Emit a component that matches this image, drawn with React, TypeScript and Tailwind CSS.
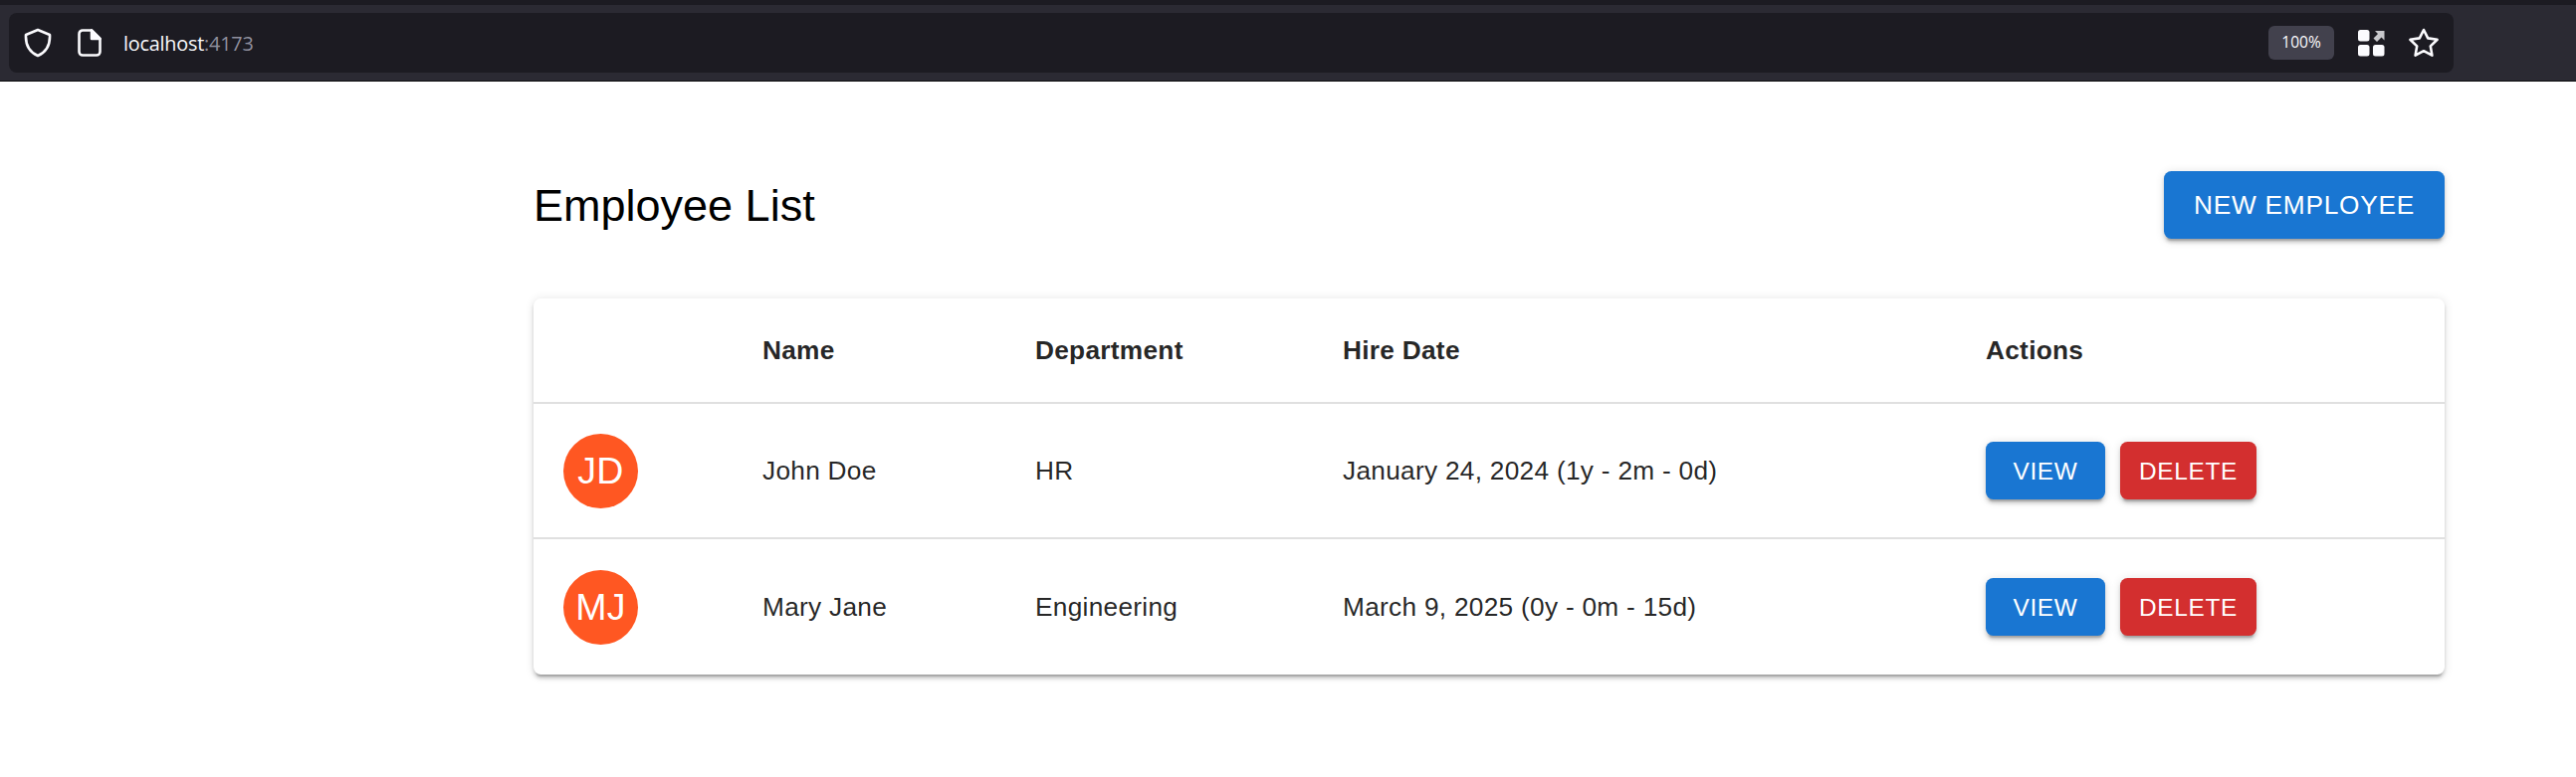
const cardShadow = "shadow-[0_5.6px_1.9px_-3.75px_rgba(0,0,0,0.2),0_3.75px_3.75px_0_rgba(0,0,0,0.14),0_1.9px_9.4px_0_rgba(0,0,0,0.12)]";

function ActionButton({ label, color }: { label: string; color: "blue" | "red" }) {
  return (
    <button
      className={
        "h-[58px] pt-[1px] rounded-[7.5px] text-white text-[24.4px] leading-[42px] tracking-[0.7px] shadow-[0_5.6px_1.9px_-3.75px_rgba(0,0,0,0.2),0_3.75px_3.75px_0_rgba(0,0,0,0.14),0_1.9px_9.4px_0_rgba(0,0,0,0.12)] " +
        (color === "blue" ? "bg-[#1976d2] w-[120px]" : "bg-[#d32f2f] w-[137px]")
      }
    >
      {label}
    </button>
  );
}

function Row({ initials, name, dept, date, last }: { initials: string; name: string; dept: string; date: string; last?: boolean }) {
  const cell = "px-[30px] align-middle " + (last ? "" : "border-b-2 border-[#e0e0e0]");
  const text = "pt-[2px]";
  return (
    <tr className={last ? "h-[137px]" : "h-[136px]"}>
      <td className={cell}>
        <div className="w-[75px] h-[75px] rounded-full bg-[#ff5722] text-white flex items-center justify-center pt-[1px] text-[37.5px]">
          {initials}
        </div>
      </td>
      <td className={cell}><div className={text}>{name}</div></td>
      <td className={cell}><div className={text}>{dept}</div></td>
      <td className={cell}><div className={text}>{date}</div></td>
      <td className={cell}>
        <div className="flex gap-[15px]">
          <ActionButton label="VIEW" color="blue" />
          <ActionButton label="DELETE" color="red" />
        </div>
      </td>
    </tr>
  );
}

function BrowserBar() {
  return (
    <div className="h-[82px] bg-[#2b2a33] border-t-[5px] border-t-[#1c1b22] border-b border-b-[#0c0c0d] pt-[8px] pl-[9px] pr-[123px]">
      <div className="h-[60px] rounded-[8px] bg-[#1c1b22] flex items-center pl-[15px] pr-[14px] text-white font-['Open_Sans',sans-serif]">
        <svg width="28" height="30" viewBox="0 0 28 30" fill="none" stroke="#fbfbfe" strokeWidth="2.6" strokeLinejoin="round" className="shrink-0">
          <path d="M14 2 L26 7 C26.5 17 23 24 14 28 C5 24 1.500 17 2 7 Z" />
        </svg>
        <svg width="24" height="28" viewBox="0 0 24 28" fill="none" stroke="#fbfbfe" strokeWidth="2.6" strokeLinejoin="round" className="shrink-0 ml-[26px]">
          <path d="M5 1.500 H14 L22.500 10 V23 A3.500 3.500 0 0 1 19 26.500 H5 A3.500 3.500 0 0 1 1.500 23 V5 A3.500 3.500 0 0 1 5 1.500 Z" />
          <path d="M14 1.500 V10 H22.500 Z" fill="#fbfbfe" />
        </svg>
        <div className="ml-[22px] pt-[2px] text-[19.8px] tracking-[-0.2px] text-[#fbfbfe]">
          localhost<span className="text-[#8f8f9d]">:4173</span>
        </div>
        <div className="ml-auto mr-[-2px] h-[34px] w-[66px] rounded-[6px] bg-[#42414d] flex items-center justify-center text-[15.500px] text-[#fbfbfe]">
          100%
        </div>
        <svg width="28" height="28" viewBox="0 0 28 28" className="shrink-0 ml-[25px]">
          <rect x="1" y="1" width="11.500" height="11.500" rx="2.500" fill="#fbfbfe" />
          <rect x="1" y="16" width="11.500" height="11.500" rx="2.500" fill="#fbfbfe" />
          <rect x="16" y="16" width="11.500" height="11.500" rx="2.500" fill="#fbfbfe" />
          <path d="M18 2 H27.500 V11.500 L24.500 8.500 L20 13 L16.500 9.500 L21 5 Z" fill="#c8c8cc" />
        </svg>
        <svg width="32" height="30" viewBox="0 0 32 30" fill="none" stroke="#fbfbfe" strokeWidth="2.6" strokeLinejoin="round" className="shrink-0 ml-[23px]">
          <path d="M16 2 L20.200 10.400 L29.600 11.800 L22.800 18.400 L24.400 27.600 L16 23.200 L7.600 27.600 L9.200 18.400 L2.400 11.800 L11.800 10.400 Z" />
        </svg>
      </div>
    </div>
  );
}

export default function App() {
  return (
    <div className="min-h-[781px] bg-white font-['Liberation_Sans',Arial,sans-serif]">
      <BrowserBar />
      <main className="pl-[536px] pr-[132px] pt-[90px]">
        <div className="flex items-center justify-between h-[68px] mb-[60px]">
          <h1 className="pt-[2px] text-[45px] leading-[68px] text-black">Employee List</h1>
          <button className={"h-[68px] w-[282px] pt-[2px] rounded-[7.5px] bg-[#1976d2] text-white text-[26.25px] tracking-[0.75px] " + cardShadow}>
            NEW EMPLOYEE
          </button>
        </div>
        <div className={"bg-white rounded-[7.5px] overflow-hidden " + cardShadow}>
          <table className="w-full table-fixed text-[26.25px] tracking-[0.28px] text-[rgba(0,0,0,0.87)] text-left">
            <colgroup>
              <col className="w-[200px]" />
              <col className="w-[274px]" />
              <col className="w-[309px]" />
              <col className="w-[646px]" />
              <col />
            </colgroup>
            <thead>
              <tr className="h-[105px]">
                <th className="border-b-2 border-[#e0e0e0]"></th>
                <th className="px-[30px] pt-[2px] font-bold border-b-2 border-[#e0e0e0]">Name</th>
                <th className="px-[30px] pt-[2px] font-bold border-b-2 border-[#e0e0e0]">Department</th>
                <th className="px-[30px] pt-[2px] font-bold border-b-2 border-[#e0e0e0]">Hire Date</th>
                <th className="px-[30px] pt-[2px] font-bold border-b-2 border-[#e0e0e0]">Actions</th>
              </tr>
            </thead>
            <tbody>
              <Row initials="JD" name="John Doe" dept="HR" date="January 24, 2024 (1y - 2m - 0d)" />
              <Row initials="MJ" name="Mary Jane" dept="Engineering" date="March 9, 2025 (0y - 0m - 15d)" last />
            </tbody>
          </table>
        </div>
      </main>
    </div>
  );
}
